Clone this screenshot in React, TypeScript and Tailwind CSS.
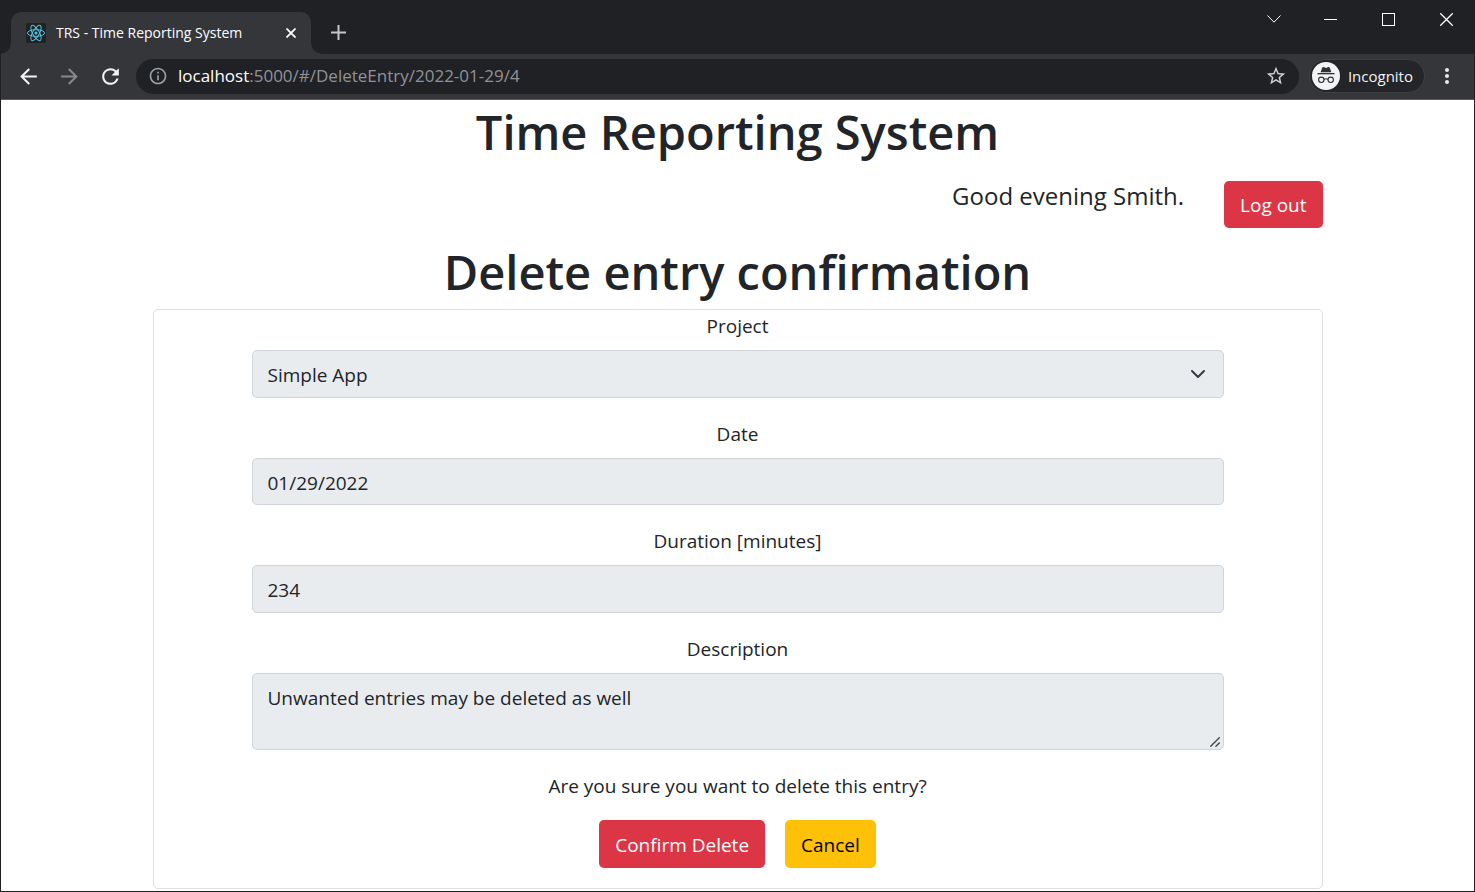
import type { ReactNode } from "react";
import { MdArrowBack, MdArrowForward, MdInfoOutline, MdRefresh, MdStarBorder } from "react-icons/md";

function ReactLogo() {
  return (
    <svg viewBox="0 0 20 20" className="h-5 w-5 shrink-0" fill="none" stroke="#53c1de" strokeWidth="1" aria-hidden="true">
      <rect width="20" height="20" rx="2" fill="#222222" stroke="none" />
      <ellipse cx="10" cy="10" rx="8.6" ry="3.3" />
      <ellipse cx="10" cy="10" rx="8.6" ry="3.3" transform="rotate(60 10 10)" />
      <ellipse cx="10" cy="10" rx="8.6" ry="3.3" transform="rotate(120 10 10)" />
      <circle cx="10" cy="10" r="1.6" fill="#53c1de" stroke="none" />
    </svg>
  );
}

function IncognitoIcon() {
  return (
    <svg viewBox="0 0 28 28" className="h-7 w-7 shrink-0" aria-hidden="true">
      <circle cx="14" cy="14" r="14" fill="#f1f3f4" />
      <path d="M10.2 5.7c.2-.6.8-.8 1.3-.6l2.5.8 2.5-.8c.6-.2 1.1.1 1.3.6l1.600 4.500H8.600z" fill="#303134" />
      <path d="M5.500 11h17v1.300h-17z" fill="#303134" />
      <g fill="none" stroke="#303134" strokeWidth="1.100">
        <circle cx="9.300" cy="17.800" r="2.700" />
        <circle cx="18.700" cy="17.800" r="2.700" />
        <path d="M12 17.500c1-.7 3-.7 4 0" />
      </g>
    </svg>
  );
}

function TabStrip() {
  return (
    <div className="flex h-[54px] items-end bg-[#202124]">
      <span className="h-2.5 w-2.5 bg-[radial-gradient(circle_at_0_0,#202124_9px,#35363a_10px)]" />
      <div className="flex h-[42px] w-[300px] items-center rounded-t-[10px] bg-[#35363a] pr-3 pl-[15px] text-white">
        <ReactLogo />
        <span className="ml-2.5 grow text-[14px] leading-5 whitespace-nowrap">TRS - Time Reporting System</span>
        <button type="button" aria-label="Close tab" className="p-[3px]">
          <svg viewBox="0 0 10 10" className="h-2.5 w-2.5" stroke="currentColor" strokeWidth="1.8" aria-hidden="true">
            <path d="M.5.5l9 9M9.5.5l-9 9" />
          </svg>
        </button>
      </div>
      <span className="h-2.5 w-2.5 bg-[radial-gradient(circle_at_100%_0,#202124_9px,#35363a_10px)]" />
      <button type="button" aria-label="New tab" className="mb-3.5 ml-2.5 text-[#c4c7ca]">
        <svg viewBox="0 0 15 15" className="h-[15px] w-[15px]" stroke="currentColor" strokeWidth="2" aria-hidden="true">
          <path d="M7.5 0v15M0 7.5h15" />
        </svg>
      </button>
      <div className="ml-auto flex h-[38px] items-center self-start text-white">
        <button type="button" aria-label="Search tabs" className="flex w-14 justify-center">
          <svg viewBox="0 0 14 8" className="h-2 w-3.5" fill="none" stroke="currentColor" aria-hidden="true">
            <path d="M.5.5L7 7.2 13.5.5" />
          </svg>
        </button>
        <button type="button" aria-label="Minimize" className="flex w-14 justify-center">
          <svg viewBox="0 0 13 13" className="h-[13px] w-[13px]" stroke="currentColor" shapeRendering="crispEdges" aria-hidden="true">
            <path d="M0 6.5h13" />
          </svg>
        </button>
        <button type="button" aria-label="Maximize" className="flex w-[60px] justify-center">
          <svg viewBox="0 0 13 13" className="h-[13px] w-[13px]" fill="none" stroke="currentColor" shapeRendering="crispEdges" aria-hidden="true">
            <path d="M.5.5h12v12h-12z" />
          </svg>
        </button>
        <button type="button" aria-label="Close window" className="flex w-14 justify-center">
          <svg viewBox="0 0 13 13" className="h-[13px] w-[13px]" stroke="currentColor" strokeWidth="1.3" aria-hidden="true">
            <path d="M.3.3l12.4 12.4M12.7.3L.3 12.7" />
          </svg>
        </button>
      </div>
    </div>
  );
}

function Toolbar() {
  return (
    <div className="flex h-[46px] items-center border-b border-[#5b5c60] bg-[#35363a] pr-[25px] pb-px pl-[15px]">
      <div className="flex gap-4 text-[#f1f3f4]">
        <button type="button" aria-label="Back"><MdArrowBack size={25} /></button>
        <button type="button" aria-label="Forward" className="text-[#88898c]"><MdArrowForward size={25} /></button>
        <button type="button" aria-label="Reload"><MdRefresh size={25} /></button>
      </div>
      <div className="ml-[13px] flex h-[35px] grow items-center rounded-full bg-[#202124] pr-3 pl-3">
        <MdInfoOutline size={20} className="text-[#9aa0a6]" />
        <div role="textbox" aria-label="Address" className="ml-2.5 grow text-[17px] leading-6 whitespace-nowrap text-[#8f9398]">
          <span className="text-white">localhost</span>:5000/#/DeleteEntry/2022-01-29/4
        </div>
        <button type="button" aria-label="Bookmark this page" className="text-[#d0d2d4]"><MdStarBorder size={22} /></button>
      </div>
      <button type="button" className="ml-2.5 flex h-[34px] items-center rounded-full border border-[#404144] bg-[#242528] pr-[11px] pl-0.5 text-[15px] leading-5 text-[#f1f3f4]">
        <IncognitoIcon />
        <span className="ml-2">Incognito</span>
      </button>
      <button type="button" aria-label="Menu" className="ml-5 text-[#e8eaed]">
        <svg viewBox="0 0 4 18" className="h-[18px] w-1" fill="currentColor" aria-hidden="true">
          <circle cx="2" cy="3" r="2" />
          <circle cx="2" cy="9" r="2" />
          <circle cx="2" cy="15" r="2" />
        </svg>
      </button>
    </div>
  );
}

const control =
  "block w-full rounded-[5px] border border-[#ced4da] bg-[#e9ecef] px-[15px] text-[19px] leading-[30px] text-[#212529] opacity-100";

function Field({ id, label, children }: { id: string; label: string; children: ReactNode }) {
  return (
    <div className="flex flex-col gap-2">
      <label htmlFor={id} className="text-center">{label}</label>
      {children}
    </div>
  );
}

export default function App() {
  return (
    <div className="min-h-screen border-x border-b border-[#202124] bg-white font-['Open_Sans','Noto_Sans',sans-serif] text-[#212529]">
      <header>
        <TabStrip />
        <Toolbar />
      </header>
      <main className="mx-auto max-w-[1170px] pb-0.5 text-[19px] leading-8">
        <h1 className="text-center text-[47px] leading-[64px] font-semibold">Time Reporting System</h1>
        <div className="mt-[17px] flex items-start justify-end gap-10">
          <p className="text-[24px] leading-[30px]">Good evening Smith.</p>
          <button type="button" className="rounded-[5px] bg-[#dc3545] px-4 pt-2 pb-[7px] text-white">Log out</button>
        </div>
        <h1 className="mt-3 text-center text-[47px] leading-[64px] font-semibold">Delete entry confirmation</h1>
        <form className="mt-[5px] flex flex-col rounded-[5px] border border-[#dfdfdf] px-[98px] pb-5" onSubmit={(e) => e.preventDefault()}>
          <div className="flex flex-col gap-5">
            <Field id="project" label="Project">
              <div className="relative">
                <select id="project" disabled className={`${control} h-12 appearance-none pt-0.5`}>
                  <option>Simple App</option>
                </select>
                <svg viewBox="0 0 16 16" className="pointer-events-none absolute top-4 right-[18px] h-4 w-4" fill="none" stroke="#343a40" strokeWidth="2" strokeLinecap="round" strokeLinejoin="round" aria-hidden="true">
                  <path d="M2 5l6 6 6-6" />
                </svg>
              </div>
            </Field>
            <Field id="date" label="Date">
              <input id="date" type="text" disabled defaultValue="01/29/2022" className={`${control} h-[47px] pt-0.5`} />
            </Field>
            <Field id="duration" label="Duration [minutes]">
              <input id="duration" type="text" disabled defaultValue="234" className={`${control} h-12 pt-0.5`} />
            </Field>
            <Field id="description" label="Description">
              <div className="relative">
                <textarea id="description" disabled defaultValue="Unwanted entries may be deleted as well" className={`${control} h-[77px] resize-none pt-[9px]`} />
                <svg viewBox="0 0 10 10" className="pointer-events-none absolute right-1 bottom-[3px] h-2.5 w-2.5" fill="none" stroke="#444648" strokeWidth="1.4" aria-hidden="true">
                  <path d="M.3 9.700l9.400-9.400M5.500 9.700l4.200-4.200" />
                </svg>
              </div>
            </Field>
          </div>
          <p className="mt-5 text-center">Are you sure you want to delete this entry?</p>
          <div className="mt-[18px] flex justify-center gap-5">
            <button type="submit" className="rounded-[5px] bg-[#dc3545] px-4 pt-[9px] pb-[7px] text-white">Confirm Delete</button>
            <button type="button" className="rounded-[5px] bg-[#ffc107] px-4 pt-[9px] pb-[7px] text-black">Cancel</button>
          </div>
        </form>
      </main>
    </div>
  );
}
